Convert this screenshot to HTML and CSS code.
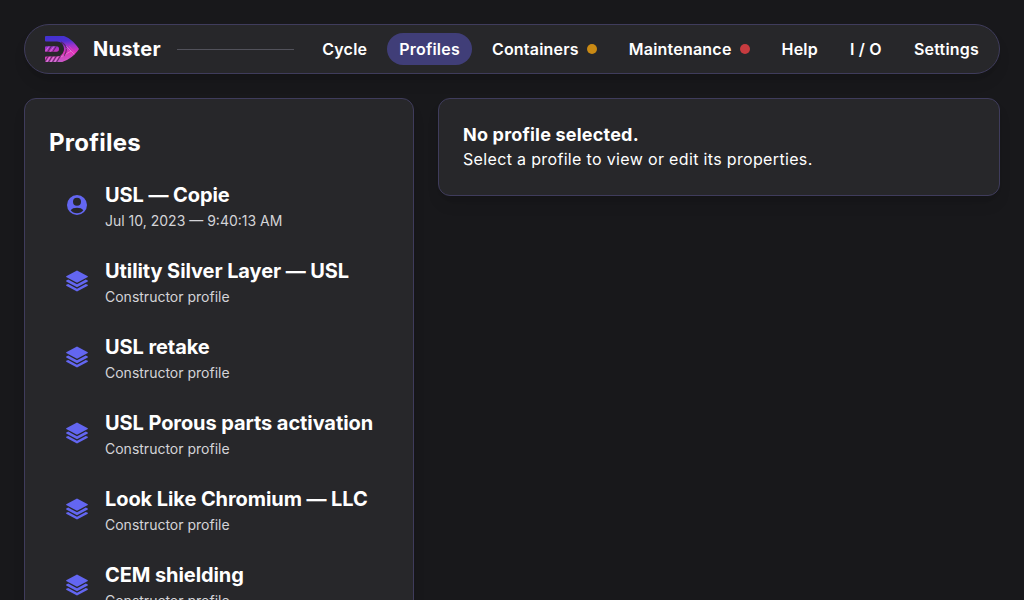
FILE: index.html
```html
<!DOCTYPE html>
<html lang="en">
<head>
<meta charset="utf-8">
<title>Nuster</title>
<link rel="stylesheet" href="styles.css">
</head>
<body>
<svg class="defs" width="0" height="0">
  <symbol id="layers" viewBox="0 0 24 24">
    <path d="M12 1.500 L22.800 7.200 V8 L12 13.800 L1.200 8 V7.200 Z"/>
    <path d="M1.200 11.400 L3.200 10.600 L12 15.300 L20.800 10.600 L22.800 11.400 V12.400 L12 18.200 L1.200 12.400 Z"/>
    <path d="M1.200 15.800 L3.200 15 L12 19.700 L20.800 15 L22.800 15.800 V16.800 L12 22.600 L1.200 16.800 Z"/>
  </symbol>
</svg>
<header class="navbar">
  <svg class="logo" viewBox="0 0 36 28">
    <defs>
      <linearGradient id="logo-fill" x1="0" y1="0" x2=".12" y2="1">
        <stop offset="0" stop-color="#3c32d0"/>
        <stop offset=".28" stop-color="#5030d0"/>
        <stop offset=".45" stop-color="#9a34cc"/>
        <stop offset=".7" stop-color="#dd34b8"/>
        <stop offset="1" stop-color="#c05cc8"/>
      </linearGradient>
      <clipPath id="logo-shape">
        <path d="M2 1H20C26 3 31 8 35 14C31 20 25 25 18 27H2Q1 27 1 26V22.500Q1 21.500 2 21.500H13C17 21.500 20 18 20 14C20 9.500 17 6.500 13 6.500H2Q1 6.500 1 5.500V2Q1 1 2 1Z"/>
        <path d="M2 11.300H12.500Q15 11.300 15 14T12.500 16.700H2Q1 16.700 1 15.700V12.300Q1 11.300 2 11.300Z"/>
      </clipPath>
    </defs>
    <g clip-path="url(#logo-shape)">
      <path fill="url(#logo-fill)" d="M0 0H36V28H0Z"/>
      <path class="logo-streak-light" d="M1 17L6 10M6 17L11 10M2 28L7 20M6 28L11 20M10 28L15 20M17 22L27 16M22 11L31 20"/>
      <path class="logo-streak-dark" d="M3 18L8 10M8 18L13 10M0 28L5 20M4 28L9 20M8 28L13 20M12 28L17 20M17 7C23 10 24 15 20 21"/>
      <path class="logo-streak-pink" d="M22 13L28 20M25 11L31 18M24 23L18 27"/>
    </g>
  </svg>
  <span class="brand">Nuster</span>
  <span class="rule"></span>
  <nav class="nav">
    <a class="nav-item">Cycle</a>
    <a class="nav-item active">Profiles</a>
    <a class="nav-item">Containers<i class="dot amber"></i></a>
    <a class="nav-item">Maintenance<i class="dot red"></i></a>
    <a class="nav-item">Help</a>
    <a class="nav-item">I / O</a>
    <a class="nav-item">Settings</a>
  </nav>
</header>
<main class="content">
  <section class="card profiles">
    <h1 class="title">Profiles</h1>
    <ul class="list">
      <li class="profile">
        <svg class="icon" viewBox="0 0 24 24"><path fill-rule="evenodd" d="M12 2a10 10 0 1 0 0 20a10 10 0 1 0 0-20ZM12 4.800a4 4 0 1 1 0 8a4 4 0 1 1 0-8ZM12 20.200c-2.700 0-4.900-1.100-6.300-2.900c1-1.700 3.600-2.500 6.300-2.500s5.300.8 6.300 2.500c-1.400 1.800-3.600 2.900-6.300 2.900Z"/></svg>
        <div><h2 class="name">USL — Copie</h2><p class="meta">Jul 10, 2023 — 9:40:13 AM</p></div>
      </li>
      <li class="profile"><svg class="icon"><use href="#layers"/></svg><div><h2 class="name">Utility Silver Layer — USL</h2><p class="meta">Constructor profile</p></div></li>
      <li class="profile"><svg class="icon"><use href="#layers"/></svg><div><h2 class="name">USL retake</h2><p class="meta">Constructor profile</p></div></li>
      <li class="profile"><svg class="icon"><use href="#layers"/></svg><div><h2 class="name">USL Porous parts activation</h2><p class="meta">Constructor profile</p></div></li>
      <li class="profile"><svg class="icon"><use href="#layers"/></svg><div><h2 class="name">Look Like Chromium — LLC</h2><p class="meta">Constructor profile</p></div></li>
      <li class="profile"><svg class="icon"><use href="#layers"/></svg><div><h2 class="name">CEM shielding</h2><p class="meta">Constructor profile</p></div></li>
    </ul>
  </section>
  <section class="card empty">
    <h3 class="empty-title">No profile selected.</h3>
    <p class="empty-text">Select a profile to view or edit its properties.</p>
  </section>
</main>
</body>
</html>
```
FILE: styles.css
```css
* { box-sizing: border-box; margin: 0; padding: 0; }
body {
  height: 600px;
  overflow: hidden;
  padding: 24px 24px 0;
  display: flex;
  flex-direction: column;
  gap: 24px;
  background: #18181b;
  color: #fff;
  font-family: Inter, "Liberation Sans", sans-serif;
  font-size: 16px;
  line-height: 24px;
  -webkit-font-smoothing: antialiased;
}
.defs { position: absolute; }
.navbar {
  flex: none;
  height: 50px;
  display: flex;
  align-items: center;
  padding: 0 8px 0 19px;
  background: #27272a;
  border: 1px solid #3f3c5c;
  border-radius: 25px;
  box-shadow: 0 10px 15px -3px rgba(0, 0, 0, .1), 0 4px 6px -4px rgba(0, 0, 0, .1);
}
.logo { width: 36px; height: 28px; flex: none; }
.logo-streak-light { fill: none; stroke: #f3b5ed; stroke-width: .7; opacity: .65; }
.logo-streak-dark { fill: none; stroke: #49204f; stroke-width: 1.1; opacity: .75; }
.logo-streak-pink { fill: none; stroke: #ff3fc0; stroke-width: .9; opacity: .6; }
.brand { margin-left: 13px; font-size: 20px; line-height: 28px; font-weight: 700; letter-spacing: .3px; }
.rule { flex: 1; height: 1px; margin: 0 16px; background: #52525b; }
.nav { display: flex; gap: 8px; }
.nav-item {
  height: 32px;
  display: flex;
  align-items: center;
  gap: 8px;
  padding: 0 12px;
  border-radius: 16px;
  font-weight: 600;
  letter-spacing: .21px;
}
.active { background: #403e78; }
.dot { width: 10px; height: 10px; border-radius: 50%; }
.amber { background: #ca8a14; }
.red { background: #c73b3f; }
.content { flex: 1; min-height: 0; display: flex; align-items: flex-start; gap: 24px; }
.card {
  background: #27272a;
  border: 1px solid #3f3c5c;
  border-radius: 12px;
  box-shadow: 0 10px 15px -3px rgba(0, 0, 0, .1), 0 4px 6px -4px rgba(0, 0, 0, .1);
}
.profiles { width: 390px; flex: none; padding: 28px 24px 24px; }
.title { font-size: 24px; line-height: 32px; font-weight: 700; letter-spacing: .25px; }
.list { list-style: none; margin-top: 16px; display: flex; flex-direction: column; gap: 16px; }
.profile { height: 60px; display: flex; align-items: center; gap: 16px; padding-left: 16px; white-space: nowrap; }
.icon { width: 24px; height: 24px; flex: none; fill: #6366f1; }
.name { margin-top: 2px; font-size: 20px; line-height: 28px; font-weight: 650; letter-spacing: -.08px; }
.meta { font-size: 14px; line-height: 20px; margin-top: 2px; color: #d4d4d8; }
.empty { flex: 1; height: 98px; padding: 23px 24px; }
.empty-title { font-size: 18px; line-height: 25px; font-weight: 650; letter-spacing: .2px; }
.empty-text { line-height: 24px; letter-spacing: .34px; }
```
